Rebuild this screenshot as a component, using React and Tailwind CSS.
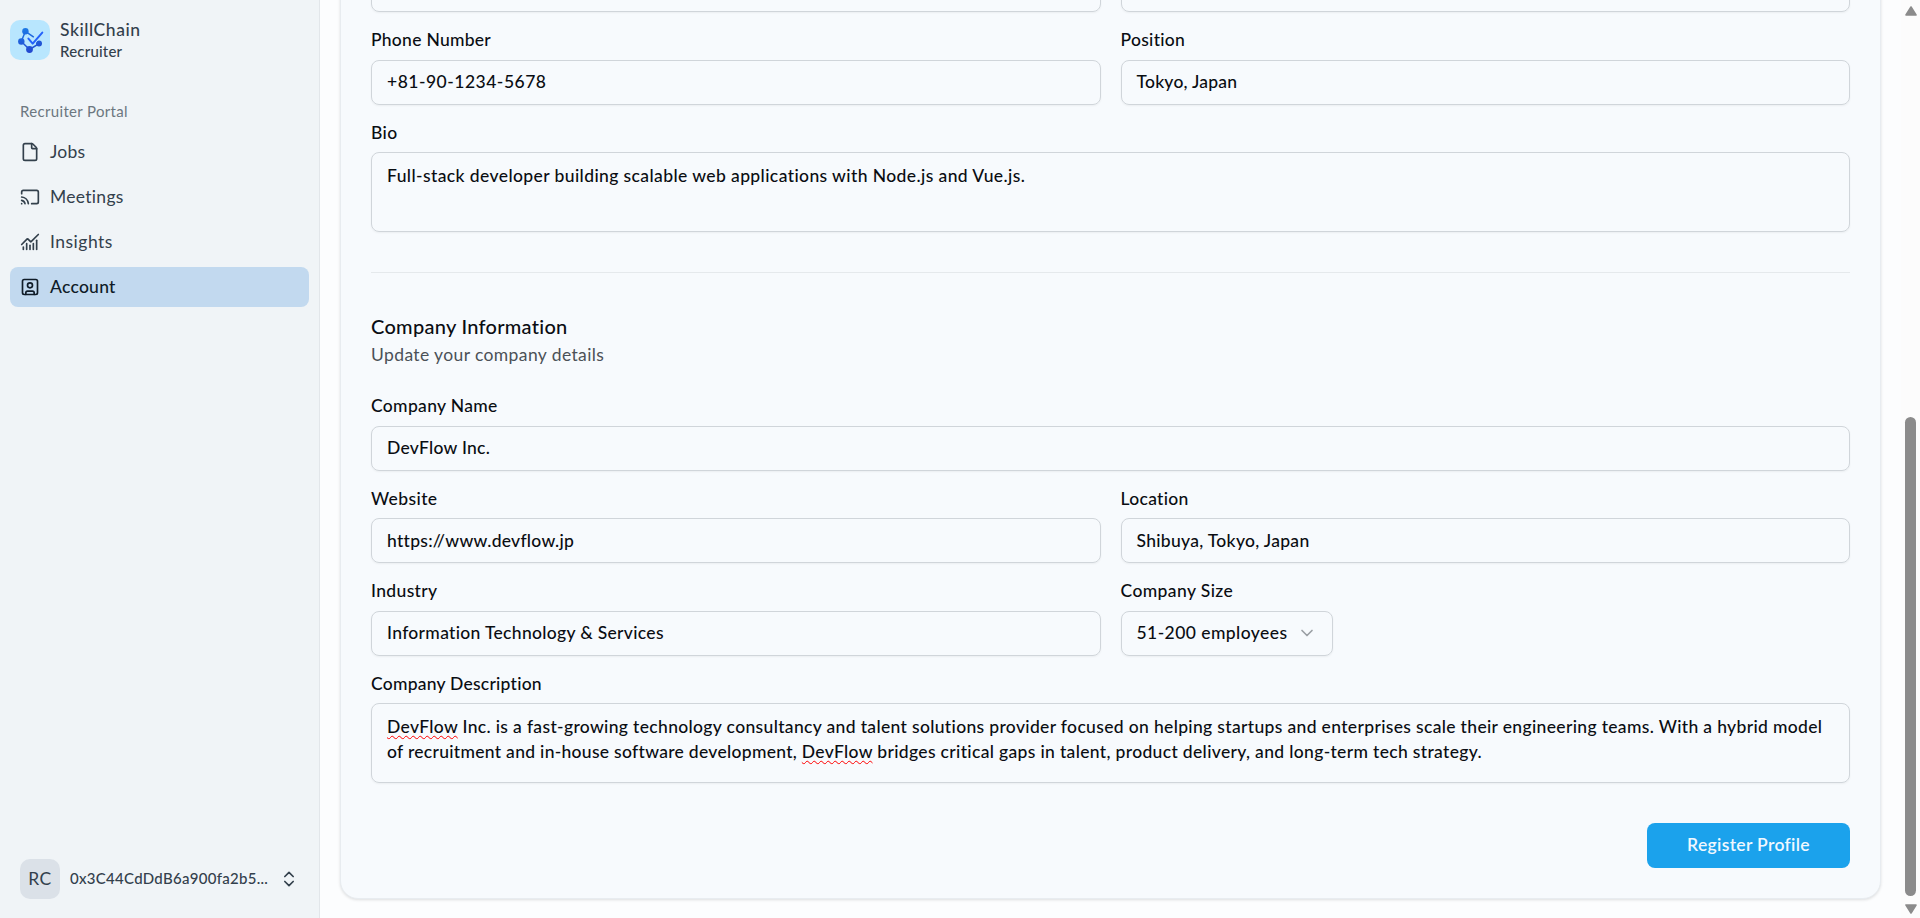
import React from 'react';
import { Cast, ChartNoAxesCombined, ChevronDown, ChevronsUpDown, File, SquareUser } from 'lucide-react';

const navItems = [
  { label: 'Jobs', icon: File, tracking: 'tracking-[0.25px]' },
  { label: 'Meetings', icon: Cast, tracking: 'tracking-[0.3px]' },
  { label: 'Insights', icon: ChartNoAxesCombined, tracking: 'tracking-[0.5px]' },
  { label: 'Account', icon: SquareUser, tracking: 'tracking-[0.26px]', active: true },
];

function Logo() {
  return (
    <svg viewBox="0 0 40 40" className="size-10" fill="none" strokeLinecap="round" strokeLinejoin="round">
      <defs>
        <linearGradient id="logo-ink" x1="15" y1="8" x2="19" y2="33" gradientUnits="userSpaceOnUse">
          <stop stopColor="#1c7ae6" />
          <stop offset="1" stopColor="#2347cf" />
        </linearGradient>
      </defs>
      <path d="M23.4 16.8 15.4 11.3 11.3 21.5 19.5 29.5 29 23.6" stroke="url(#logo-ink)" strokeWidth="1.5" />
      <g fill="url(#logo-ink)">
        <circle cx="15.4" cy="11.3" r="3.2" />
        <circle cx="11.3" cy="21.5" r="3.2" />
        <circle cx="19.5" cy="29.5" r="3.4" />
        <circle cx="29" cy="23.6" r="3" />
      </g>
      <path d="M18.4 18.6 22.7 23.6 32.3 12.6" stroke="#b8e6fe" strokeWidth="3.6" />
      <path d="M18.4 18.6 22.7 23.6 32.3 12.6" stroke="#2563fb" strokeWidth="2" />
    </svg>
  );
}

function NavItem({ label, icon: Icon, tracking, active }) {
  return (
    <a
      className={`flex h-10 items-center gap-2.5 rounded-[8px] px-2.5 ${
        active ? 'bg-[#c2d9ef] font-medium text-[#101c28]' : 'text-[#33404c]'
      }`}
    >
      <Icon size={20} strokeWidth={2} />
      <span className={`pb-0.5 text-[17.5px] leading-[23px] ${tracking}`}>{label}</span>
    </a>
  );
}

function Sidebar() {
  return (
    <aside className="flex w-80 shrink-0 flex-col border-r border-[#e2e6ea] bg-[#f0f4f7] text-[#33404c]">
      <header className="flex h-[60px] items-center gap-2.5 px-2.5 pt-5">
        <div className="size-10 overflow-hidden rounded-[10px] bg-[#b8e6fe]">
          <Logo />
        </div>
        <div className="flex flex-col gap-px font-medium">
          <span className="text-[17.5px] leading-[21px] tracking-[0.55px]">SkillChain</span>
          <span className="text-[15px] leading-[20px] tracking-[0.2px]">Recruiter</span>
        </div>
      </header>
      <nav className="flex flex-col gap-[5px] px-2.5 pt-[32px]">
        <div className="flex h-[35px] items-center px-2.5 text-[15px] tracking-[0.33px] text-[#6c7780]">
          <span className="pt-[3px]">Recruiter Portal</span>
        </div>
        {navItems.map((item) => (
          <NavItem key={item.label} {...item} />
        ))}
      </nav>
      <footer className="mt-auto flex items-center px-5 pb-[19px]">
        <div className="flex size-10 items-center justify-center rounded-[10px] bg-[#dbe1e8] text-[17.5px] tracking-[0.6px]">
          RC
        </div>
        <span className="ml-2.5 w-[209px] whitespace-nowrap pb-0.5 text-[15px] font-medium tracking-[0.28px]">
          0x3C44CdDdB6a900fa2b5...
        </span>
        <ChevronsUpDown size={20} strokeWidth={2} />
      </footer>
    </aside>
  );
}

const boxClass = 'rounded-[8px] border border-[#d0d5da] shadow-[0_1px_2px_rgba(0,0,0,0.05)]';

function Field({ label, labelTracking, children }) {
  return (
    <div className="flex flex-col gap-2.5">
      <label className={`pb-px text-[17.5px] font-medium leading-[16.5px] ${labelTracking}`}>{label}</label>
      {children}
    </div>
  );
}

function Input({ value, tracking }) {
  return (
    <div className={`flex h-[45px] items-center px-[15px] pt-[0.6px] text-[17.5px] font-medium ${tracking} ${boxClass}`}>
      {value}
    </div>
  );
}

function TextArea({ children }) {
  return (
    <div className={`h-20 whitespace-nowrap px-[15px] pt-[9.4px] text-[17.5px] font-medium leading-[25px] ${boxClass}`}>
      {children}
    </div>
  );
}

function Misspelled({ children }) {
  return (
    <span className="underline decoration-[#f00] decoration-wavy decoration-[1.3px] underline-offset-[2px] [text-decoration-skip-ink:none]">
      {children}
    </span>
  );
}

function Scrollbar() {
  return (
    <div className="flex w-[19px] shrink-0 flex-col items-center bg-[#fcfcfc]">
      <svg viewBox="0 0 12 10" className="mt-1.5 h-2.5 w-3" fill="#8b8b8b" stroke="#8b8b8b" strokeLinejoin="round">
        <path d="M6 1 11 9H1Z" strokeWidth="1.6" />
      </svg>
      <div className="mt-[401px] w-[11px] flex-1 rounded-full bg-[#8b8b8b]" />
      <svg viewBox="0 0 12 10" className="mb-1 mt-2 h-2.5 w-3" fill="#8b8b8b" stroke="#8b8b8b" strokeLinejoin="round">
        <path d="M6 9 1 1H11Z" strokeWidth="1.6" />
      </svg>
    </div>
  );
}

export default function App() {
  return (
    <div className="flex h-screen overflow-hidden bg-[#fcfdfe] font-['Lato',sans-serif] text-[#0a0d12]">
      <Sidebar />
      <main className="flex min-w-0 flex-1 flex-col justify-end overflow-hidden px-5 pb-[18.9px]">
        <section className="flex flex-col gap-10 rounded-[18px] border border-[#e8ecf0] bg-[#f7fafd] p-[30px] shadow-[0_1px_3px_rgba(0,0,0,0.12)]">
          <div className="flex flex-col gap-5">
            <div className="grid grid-cols-2 gap-5">
              <div className={`h-[45px] ${boxClass}`} />
              <div className={`h-[45px] ${boxClass}`} />
            </div>
            <div className="grid grid-cols-2 gap-5">
              <Field label="Phone Number" labelTracking="tracking-[0.27px]">
                <Input value="+81-90-1234-5678" tracking="tracking-[0.5px]" />
              </Field>
              <Field label="Position" labelTracking="tracking-[0.3px]">
                <Input value="Tokyo, Japan" tracking="tracking-[0.22px]" />
              </Field>
            </div>
            <Field label="Bio" labelTracking="tracking-[0.4px]">
              <TextArea>
                <p className="tracking-[0.4px]">
                  Full-stack developer building scalable web applications with Node.js and Vue.js.
                </p>
              </TextArea>
            </Field>
          </div>

          <hr className="h-px border-0 bg-[#e5e9ec]" />

          <div className="flex flex-col">
            <h2 className="pb-[3px] text-[20px] font-medium leading-[27px] tracking-[0.28px]">Company Information</h2>
            <p className="pb-[1px] text-[17.5px] leading-[24px] tracking-[0.39px] text-[#4b5157]">
              Update your company details
            </p>
            <div className="mt-[30px] flex flex-col gap-5">
              <Field label="Company Name" labelTracking="tracking-[0.33px]">
                <Input value="DevFlow Inc." tracking="tracking-[0.27px]" />
              </Field>
              <div className="grid grid-cols-2 gap-5">
                <Field label="Website" labelTracking="tracking-[0.4px]">
                  <Input value="https://www.devflow.jp" tracking="tracking-[0.27px]" />
                </Field>
                <Field label="Location" labelTracking="tracking-[0.3px]">
                  <Input value="Shibuya, Tokyo, Japan" tracking="tracking-[0.3px]" />
                </Field>
                <Field label="Industry" labelTracking="tracking-[0.35px]">
                  <Input value="Information Technology & Services" tracking="tracking-[0.32px]" />
                </Field>
                <Field label="Company Size" labelTracking="tracking-[0.4px]">
                  <div
                    className={`flex h-[45px] w-[212px] items-center justify-between px-[15px] text-[17.5px] font-medium tracking-[0.43px] ${boxClass}`}
                  >
                    <span>51-200 employees</span>
                    <ChevronDown size={20} strokeWidth={2} className="text-[#9a9fa4]" />
                  </div>
                </Field>
              </div>
              <Field label="Company Description" labelTracking="tracking-[0.24px]">
                <TextArea>
                  <p className="tracking-[0.34px]">
                    <Misspelled>DevFlow</Misspelled> Inc. is a fast-growing technology consultancy and talent solutions
                    provider focused on helping startups and enterprises scale their engineering teams. With a hybrid
                    model
                  </p>
                  <p className="tracking-[0.336px]">
                    <span className="tracking-[0.295px]">of recruitment and in-house software development, </span>
                    <Misspelled>DevFlow</Misspelled> bridges critical gaps in talent, product delivery, and long-term
                    tech strategy.
                  </p>
                </TextArea>
              </Field>
            </div>
          </div>

          <div className="flex justify-end">
            <button className="h-[45px] w-[203px] rounded-[8px] bg-[#1ba2ec] text-[17.5px] font-semibold tracking-[0.33px] text-[#f0f8ff]">
              Register Profile
            </button>
          </div>
        </section>
      </main>
      <Scrollbar />
    </div>
  );
}
